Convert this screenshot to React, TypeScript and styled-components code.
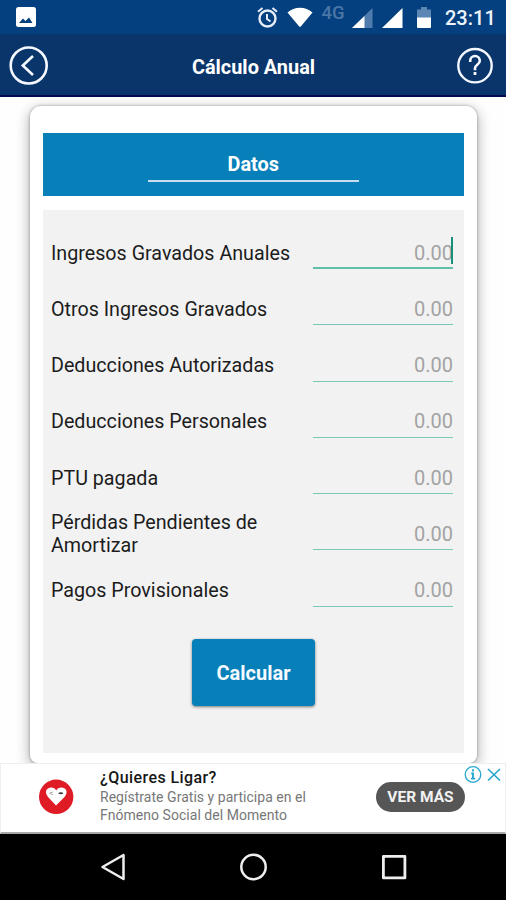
import React from "react";
import styled, { createGlobalStyle } from "styled-components";

const GlobalStyle = createGlobalStyle`
  * { box-sizing: border-box; }
  body { margin: 0; background: #fefefe; font-family: Roboto, "Noto Sans", sans-serif; }
  button, input { font-family: inherit; }
  svg { display: block; flex: none; }
`;

const Screen = styled.div`
  display: flex;
  flex-direction: column;
  width: 506px;
  height: 900px;
  overflow: hidden;
  background: #fefefe;
`;

const StatusBar = styled.div`
  display: flex;
  align-items: flex-start;
  justify-content: space-between;
  flex: none;
  height: 34px;
  padding: 7px 11px 0 16px;
  background: #04407f;
`;

const StatusIcons = styled.div`
  display: flex;
  align-items: flex-start;
`;

const Network = styled.span`
  width: 30px;
  margin: -4px 0 0 9px;
  color: #4a76a6;
  font-size: 18.5px;
  font-weight: 500;
  line-height: 21px;
`;

const Clock = styled.span`
  width: 50px;
  margin-left: 14px;
  color: #eef4fb;
  font-size: 20px;
  font-weight: 500;
  line-height: 23px;
  white-space: nowrap;
`;

const Header = styled.header`
  display: flex;
  align-items: center;
  justify-content: space-between;
  flex: none;
  height: 63px;
  padding: 1px 12px 0 9px;
  background: #09356b;
  border-bottom: 2px solid #020b52;
`;

const Title = styled.h1`
  margin: 5px 0 0 2px;
  color: #fff;
  font-size: 19.9px;
  font-weight: 700;
  line-height: 24px;
`;

const IconButton = styled.button`
  display: block;
  padding: 0;
  border: 0;
  background: none;
`;

const Main = styled.main`
  flex: none;
  height: 666px;
  padding: 9px 29px 0 30px;
  overflow: hidden;
`;

const Card = styled.section`
  height: 657px;
  padding: 27px 13px 0 12.5px;
  border-radius: 11px 11px 8px 8px;
  background: #fff;
  box-shadow: 0 0 2px 1px rgba(70, 70, 60, 0.22), 0 4px 13px 1px rgba(0, 0, 0, 0.3);
`;

const Banner = styled.div`
  display: flex;
  flex-direction: column;
  align-items: center;
  height: 63px;
  padding-top: 18px;
  background: #077fb9;
`;

const BannerTitle = styled.h2`
  width: 211px;
  height: 31px;
  margin: 0;
  padding-top: 2px;
  border-bottom: 2px solid #cbdcf1;
  color: #fff;
  font-size: 19.9px;
  font-weight: 700;
  line-height: 24px;
  text-align: center;
`;

const Form = styled.form`
  display: flex;
  flex-direction: column;
  height: 543px;
  margin-top: 14px;
  padding: 15px 11px 0 8.5px;
  background: #f2f2f2;
`;

const Row = styled.label`
  display: flex;
  align-items: center;
  justify-content: space-between;
  flex: none;
  height: 56.25px;
`;

const Label = styled.span`
  width: 250px;
  color: #1c1c1c;
  font-size: 19.7px;
  line-height: 23px;
`;

const Field = styled.span<{ $active: boolean }>`
  position: relative;
  width: 140px;
  height: 35px;
  margin-bottom: 3px;
  border-bottom: ${(p) => (p.$active ? "2px solid #62bda9" : "1px solid #7cc8b8")};
  &::after {
    content: "";
    display: ${(p) => (p.$active ? "block" : "none")};
    position: absolute;
    top: 3px;
    right: 0;
    width: 2px;
    height: 27px;
    background: #169178;
  }
`;

const Input = styled.input`
  display: block;
  width: 100%;
  height: 32px;
  padding: 5px 0 0;
  border: 0;
  outline: 0;
  background: none;
  font-size: 20px;
  text-align: right;
  &::placeholder { color: #a3a3a3; opacity: 1; }
`;

const Submit = styled.button`
  flex: none;
  width: 123px;
  height: 67px;
  margin: 20.25px 0 0 141px;
  padding: 1px 0 0;
  border: 0;
  border-radius: 4px;
  background: #077fb9;
  box-shadow: 0 1px 3px rgba(0, 0, 0, 0.5);
  color: #f4faff;
  font-size: 20px;
  font-weight: 700;
`;

const Ad = styled.aside`
  position: relative;
  display: flex;
  align-items: flex-start;
  flex: none;
  height: 71px;
  padding-left: 38px;
  border: 1px solid #efefef;
  border-bottom: 2px solid #a8a8a8;
  background: #fff;
`;

const AdLogo = styled.div`
  margin-top: 15px;
`;

const AdCopy = styled.div`
  width: 276px;
  margin: 5px 0 0 25px;
`;

const AdTitle = styled.div`
  color: #161616;
  font-size: 16px;
  font-weight: 500;
  line-height: 18px;
  letter-spacing: 0.42px;
`;

const AdText = styled.div`
  margin-top: 1px;
  color: #777;
  font-size: 14px;
  letter-spacing: 0.03px;
  line-height: 18px;
`;

const AdAction = styled.button`
  width: 89px;
  height: 30px;
  margin-top: 18px;
  padding: 0;
  border: 0;
  border-radius: 15px;
  background: #565656;
  color: #f2f2f2;
  font-size: 15.5px;
  font-weight: 700;
  white-space: nowrap;
`;

const AdChoices = styled.div`
  position: absolute;
  top: 1px;
  right: 2px;
  display: flex;
`;

const NavBar = styled.nav`
  display: flex;
  align-items: center;
  justify-content: space-between;
  flex: none;
  height: 66px;
  padding: 0 98px 0 99px;
  background: #000;
`;

const fields = [
  "Ingresos Gravados Anuales",
  "Otros Ingresos Gravados",
  "Deducciones Autorizadas",
  "Deducciones Personales",
  "PTU pagada",
  "Pérdidas Pendientes de Amortizar",
  "Pagos Provisionales",
];

const PictureIcon = () => (
  <svg width="20" height="20" viewBox="0 0 20 20">
    <rect width="20" height="20" rx="2.5" fill="#fff" />
    <path d="M3 16L7 11.5L9.500 14L13 10.500L16.500 16z" fill="#04407f" />
  </svg>
);

const AlarmIcon = () => (
  <svg width="21" height="21" viewBox="0 0 21 21" fill="none" stroke="#e6edf7" strokeWidth="2.4">
    <circle cx="10.5" cy="11.500" r="8" />
    <path d="M10 7v5l3.500 2.500" strokeWidth="2" />
    <path d="M1 4.800L5.500 1M20 4.800L15.500 1" strokeWidth="2" />
  </svg>
);

const WifiIcon = () => (
  <svg width="26" height="21" viewBox="0 0 26 21">
    <path d="M0.500 5.500C7-1 19-1 25.500 5.500L14 19.200Q13 20.400 12 19.200z" fill="#fff" />
  </svg>
);

const SignalIcon = ({ partial }: { partial?: boolean }) => (
  <svg width="21" height="21" viewBox="0 0 21 21">
    <path d="M0 21L20.500 1V21z" fill={partial ? "#4f7cac" : "#fff"} />
    {partial && <path d="M0 21L12.500 9V21z" fill="#fff" />}
  </svg>
);

const BatteryIcon = () => (
  <svg width="14" height="21" viewBox="0 0 14 21">
    <path d="M0 2.500h4V0h6v2.500h4V11H0z" fill="#5c86b4" />
    <path d="M0 10.500h14V20a1 1 0 0 1-1 1H1a1 1 0 0 1-1-1z" fill="#fff" />
  </svg>
);

const BackIcon = () => (
  <svg width="40" height="40" viewBox="0 0 40 40" fill="none" stroke="#f5f8ff">
    <circle cx="19.700" cy="20.500" r="18" strokeWidth="2.600" />
    <path d="M24 11L13.800 20.500L24 30" strokeWidth="2.600" />
  </svg>
);

const HelpIcon = () => (
  <svg width="38" height="38" viewBox="0 0 38 38" fill="none" stroke="#f5f8ff">
    <circle cx="19" cy="19.700" r="16.700" strokeWidth="2.400" />
    <path d="M14.200 16v-1.200a4.800 4.800 0 0 1 9.600 0c0 4-4.800 4-4.800 7.500v2" strokeWidth="2.600" />
    <path d="M19 26v3" strokeWidth="2.800" />
  </svg>
);

const HeartIcon = () => (
  <svg width="36" height="36" viewBox="0 0 36 36">
    <circle cx="17.200" cy="17.800" r="17.200" fill="#df1c25" />
    <path d="M17 26.500L9 18C4.500 12 8.500 8.500 12 8.500c2.500 0 4.300 1.200 5.200 3C18.200 9.500 20 8.500 22.500 8.500c4 0 7.500 4 3 9.500z" fill="#fff" />
    <path d="M14 13l-3.500 1.200L14 15.800" fill="none" stroke="#aaa" strokeWidth="1" />
    <path d="M19 14.200q3-2 5.500 0-2.500 2-5.500 0z" fill="#333" />
  </svg>
);

const InfoIcon = () => (
  <svg width="18" height="18" viewBox="0 0 18 18" fill="none" stroke="#28a7cf">
    <circle cx="9" cy="9.500" r="7.800" strokeWidth="1.300" />
    <path d="M9 4.300v2.200M7.200 8.500H9v5M7 13.600h4.200" strokeWidth="1.900" />
  </svg>
);

const CloseIcon = () => (
  <svg width="18" height="18" viewBox="0 0 18 18" fill="none" stroke="#28a7cf" strokeWidth="1.700">
    <path d="M3 4l12 11.500M15 4l-12 11.500" />
  </svg>
);

const Gap = styled.div<{ $left: number }>`
  margin-left: ${(p) => p.$left}px;
`;

export default function App() {
  return (
    <>
      <GlobalStyle />
      <Screen>
        <StatusBar>
          <PictureIcon />
          <StatusIcons>
            <AlarmIcon />
            <Gap $left={8.5}><WifiIcon /></Gap>
            <Network>4G</Network>
            <Gap $left={0.5}><SignalIcon partial /></Gap>
            <Gap $left={9}><SignalIcon /></Gap>
            <Gap $left={14}><BatteryIcon /></Gap>
            <Clock>23:11</Clock>
          </StatusIcons>
        </StatusBar>
        <Header>
          <IconButton aria-label="Atrás"><BackIcon /></IconButton>
          <Title>Cálculo Anual</Title>
          <IconButton aria-label="Ayuda"><HelpIcon /></IconButton>
        </Header>
        <Main>
          <Card>
            <Banner>
              <BannerTitle>Datos</BannerTitle>
            </Banner>
            <Form onSubmit={(e) => e.preventDefault()}>
              {fields.map((name, i) => (
                <Row key={name}>
                  <Label>{name}</Label>
                  <Field $active={i === 0}>
                    <Input placeholder="0.00" inputMode="decimal" />
                  </Field>
                </Row>
              ))}
              <Submit type="submit">Calcular</Submit>
            </Form>
          </Card>
        </Main>
        <Ad>
          <AdLogo><HeartIcon /></AdLogo>
          <AdCopy>
            <AdTitle>¿Quieres Ligar?</AdTitle>
            <AdText>
              Regístrate Gratis y participa en el
              <br />
              Fnómeno Social del Momento
            </AdText>
          </AdCopy>
          <AdAction>VER MÁS</AdAction>
          <AdChoices>
            <InfoIcon />
            <Gap $left={3}><CloseIcon /></Gap>
          </AdChoices>
        </Ad>
        <NavBar>
          <svg width="28" height="28" viewBox="0 0 28 28" fill="none" stroke="#eee" strokeWidth="2.500" strokeLinejoin="round">
            <path d="M24.500 2v24L3.500 14z" />
          </svg>
          <svg width="28" height="28" viewBox="0 0 28 28" fill="none" stroke="#eee" strokeWidth="2.500">
            <circle cx="13.500" cy="14" r="12.200" />
          </svg>
          <svg width="28" height="28" viewBox="0 0 28 28" fill="none" stroke="#eee" strokeWidth="2.800" strokeLinejoin="round">
            <rect x="3.400" y="3.400" width="21.500" height="21.500" />
          </svg>
        </NavBar>
      </Screen>
    </>
  );
}
